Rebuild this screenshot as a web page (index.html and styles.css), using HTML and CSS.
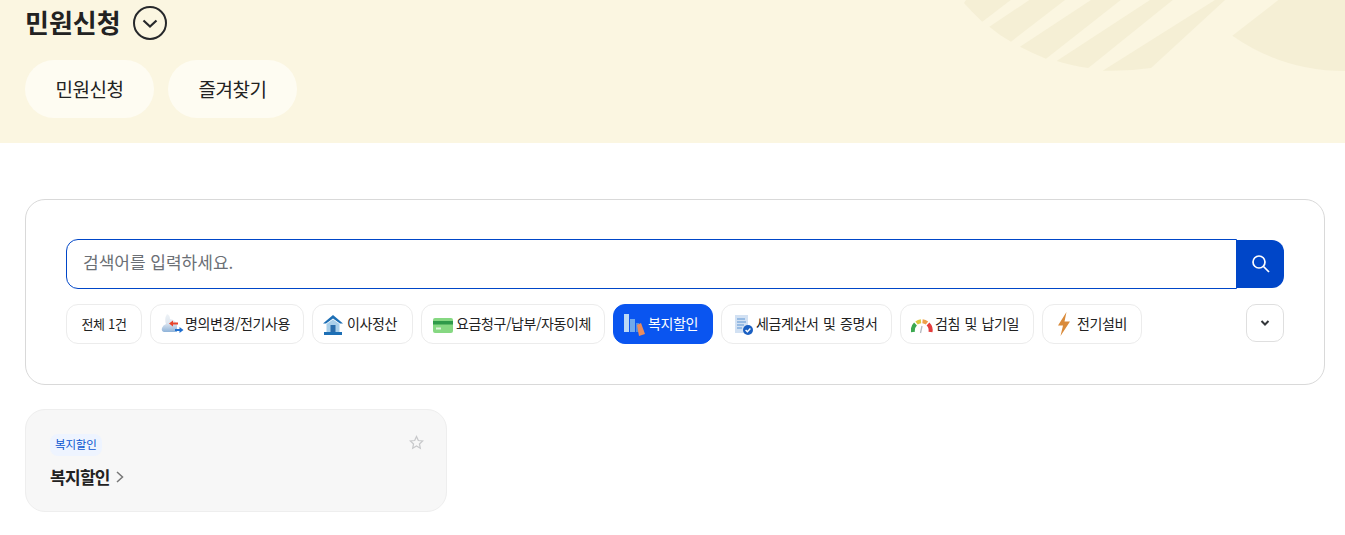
FILE: index.html
```html
<!DOCTYPE html>
<html lang="ko">
<head>
<meta charset="utf-8">
<title>민원신청</title>
<link rel="stylesheet" href="styles.css">
</head>
<body>
<header class="banner">
  <svg class="banner-art" width="1345" height="143" viewBox="0 0 1345 143" aria-hidden="true">
    <path d="M966 0H1010.7L982.3 21.7Q972 12 964 3Z"/>
    <path d="M1029.3 0H1065L1011 41.7Q999 35 989.3 26.7Z"/>
    <path d="M1091 0H1120.7L1046 58.7Q1032 53 1020 46.7Z"/>
    <path d="M1150 0H1172.7L1088.3 68Q1071 65.500 1056.700 61Z"/>
    <path d="M1215 0H1225L1151 68Q1127 71.500 1102.700 70.700Z"/>
    <path d="M1278.300 0H1345V71Q1283 71 1232.300 35.700Z"/>
  </svg>
  <div class="title-row">
    <h1 class="title">민원신청</h1>
    <span class="title-toggle">
      <svg width="34" height="34" viewBox="0 0 34 34" fill="none" stroke="#26282b" aria-hidden="true"><circle cx="17" cy="17" r="16" stroke-width="2"/><path d="M10.500 14.500L17 20.500L23.500 14.500" stroke-width="2.200"/></svg>
    </span>
  </div>
  <nav class="tabs">
    <a class="tab">민원신청</a>
    <a class="tab">즐겨찾기</a>
  </nav>
</header>
<main class="content">
  <section class="panel">
    <div class="search">
      <div class="search-input">검색어를 입력하세요.</div>
      <div class="search-btn">
        <svg width="20" height="20" viewBox="0 0 20 20" fill="none" stroke="#fff" stroke-width="1.700" aria-hidden="true"><circle cx="8" cy="8" r="6"/><path d="M12.500 12.500L18 18"/></svg>
      </div>
    </div>
    <div class="filters">
      <div class="chips">
        <span class="chip chip-all">전체 1건</span>
        <span class="chip">
          <svg class="chip-icon" viewBox="0 0 24 24" aria-hidden="true">
            <defs><linearGradient id="cloud" x1="0" y1="0" x2="0" y2="1"><stop offset="0" stop-color="#eef2f6"/><stop offset="0.5" stop-color="#dfe7f0"/><stop offset="1" stop-color="#8fb3d9"/></linearGradient></defs>
            <path d="M6 2Q9 3 9 7Q15 8 16 13V20H3Q0 19 1 16Q2 13 5 12Q3 7 6 2Z" fill="url(#cloud)"/>
            <path d="M17 10.500H12V8.500L8 11.500L12 14.500V12.500H17Z" fill="#e8452c"/>
            <path d="M14 17H18.500V15L22.500 18L18.500 21V19H14Z" fill="#1f6fd0"/>
          </svg>명의변경/전기사용</span>
        <span class="chip">
          <svg class="chip-icon" viewBox="0 0 24 24" aria-hidden="true">
            <path d="M10 3L20 11.500H17L10 6.500L3 11.500H0Z" fill="#1d6fb5"/>
            <path d="M10 7.500L16.500 12V20H3.500V12Z" fill="#a9cfea"/>
            <path d="M7.500 13H12.500V20H7.500Z" fill="#2a6cab"/>
            <path d="M1 20H19V23H1Z" fill="#1d6fb5"/>
          </svg>이사정산</span>
        <span class="chip">
          <svg class="chip-icon" viewBox="0 0 24 24" aria-hidden="true">
            <rect x="1" y="6" width="20" height="15" rx="2" fill="#86d882"/>
            <rect x="1" y="9" width="20" height="3.500" fill="#2f9a4a"/>
            <rect x="4" y="15.500" width="5" height="2" fill="#dbf4da"/>
          </svg>요금청구/납부/자동이체</span>
        <span class="chip chip-active">
          <svg class="chip-icon" viewBox="0 0 24 24" aria-hidden="true">
            <rect x="0" y="2" width="5" height="18" fill="#bcd8f5"/>
            <rect x="6" y="7" width="5" height="13" fill="#6fa9ec"/>
            <rect x="12" y="11" width="3" height="9" fill="#4d8fe6"/>
            <path d="M13 13L17 11L21 22L15 24Z" fill="#e98c5e"/>
          </svg>복지할인</span>
        <span class="chip">
          <svg class="chip-icon" viewBox="0 0 24 24" aria-hidden="true">
            <rect x="3" y="3" width="13" height="18" fill="#d2e1f3"/>
            <path d="M5 7H13M5 10H14M5 13H12M5 16H10" stroke="#84aede" stroke-width="1.300"/>
            <circle cx="16" cy="18" r="5" fill="#1a5fc2"/>
            <path d="M13.600 18L15.400 19.800L18.400 16.500" stroke="#fff" stroke-width="1.400" fill="none"/>
          </svg>세금계산서 및 증명서</span>
        <span class="chip">
          <svg class="chip-icon" viewBox="0 0 24 24" fill="none" aria-hidden="true">
            <path d="M2 20A9 9 0 0 1 4.500 12" stroke="#3aa84f" stroke-width="4"/>
            <path d="M5.500 11A9 9 0 0 1 10 9.300" stroke="#dcc83f" stroke-width="4"/>
            <path d="M11.500 9.300A9 9 0 0 1 16 11" stroke="#ee9f4a" stroke-width="4"/>
            <path d="M17 12A9 9 0 0 1 19.500 20" stroke="#e43c3c" stroke-width="4"/>
            <path d="M11 14L9.500 21" stroke="#b5b9bf" stroke-width="1.300"/>
          </svg>검침 및 납기일</span>
        <span class="chip">
          <svg class="chip-icon" viewBox="0 0 24 24" aria-hidden="true">
            <path d="M13.500 0L5 13.500H10L7.500 24L17 9.500H11.500Z" fill="#d98a3a"/>
          </svg>전기설비</span>
      </div>
      <button class="more" type="button" aria-label="더보기">
        <svg width="10" height="8" viewBox="0 0 10 8" fill="none" stroke="#33363a" stroke-width="2" aria-hidden="true"><path d="M1.500 2L5 5.500L8.500 2"/></svg>
      </button>
    </div>
  </section>
  <article class="card">
    <div class="card-top">
      <span class="badge">복지할인</span>
      <svg class="star" width="15" height="15" viewBox="0 0 24 24" fill="none" stroke="#c8c9cb" stroke-width="2" aria-hidden="true"><path d="M12 2.500L14.900 8.800L21.800 9.600L16.700 14.300L18.100 21.100L12 17.700L5.900 21.100L7.300 14.300L2.200 9.600L9.100 8.800Z"/></svg>
    </div>
    <h2 class="card-title">복지할인
      <svg width="8" height="12" viewBox="0 0 8 12" fill="none" stroke="#777" stroke-width="1.500" aria-hidden="true"><path d="M1 1L6.500 6L1 11"/></svg>
    </h2>
  </article>
</main>
</body>
</html>
```
FILE: styles.css
```css
* { box-sizing: border-box; }
html, body { margin: 0; padding: 0; background: #fff; }
body {
  font-family: "Noto Sans CJK KR", "Noto Sans", sans-serif;
  color: #222;
  height: 535px;
  overflow: hidden;
}
.banner {
  position: relative;
  height: 143px;
  padding: 3px 25px 0;
  background: #fbf6e1;
  overflow: hidden;
}
.banner-art { position: absolute; left: 0; top: 0; fill: #f5efd5; }
.title-row {
  position: relative;
  display: flex;
  align-items: center;
  gap: 12px;
  height: 38px;
}
.title {
  margin: 0;
  font-size: 26px;
  font-weight: 700;
  line-height: 38px;
  color: #222;
}
.title-toggle { display: flex; margin-top: 2px; }
.tabs { position: relative; display: flex; gap: 14px; margin-top: 19px; }
.tab {
  display: flex;
  align-items: center;
  justify-content: center;
  width: 129px;
  height: 58px;
  padding-bottom: 2px;
  border-radius: 29px;
  background: #fefcf2;
  font-size: 19px;
  letter-spacing: -0.5px;
  color: #222;
}
.content { padding: 56px 20px 0 25px; }
.panel {
  height: 186px;
  padding: 39px 40px 0;
  border: 1px solid #d9d9d9;
  border-radius: 20px;
  background: #fff;
}
.search { display: flex; align-items: center; }
.search-input {
  flex: 1;
  height: 50px;
  padding-left: 16px;
  border: 1px solid #0046c8;
  border-radius: 12px 0 0 12px;
  font-size: 17px;
  line-height: 44px;
  color: #6b6f75;
}
.search-btn {
  display: flex;
  align-items: center;
  justify-content: center;
  width: 47px;
  height: 48px;
  border-radius: 0 12px 12px 0;
  background: #0046c8;
}
.filters { display: flex; justify-content: space-between; align-items: flex-start; margin-top: 15px; }
.chips {
  display: grid;
  grid-template-columns: 76px 154px 101px 184px 100px 171px 134px 100px;
  gap: 8px;
}
.chip {
  display: flex;
  align-items: center;
  height: 40px;
  padding: 0 0 2px 10px;
  border: 1px solid #ececec;
  border-radius: 12px;
  background: #fff;
  font-size: 14px;
  letter-spacing: -0.4px;
  word-spacing: 1px;
  color: #222;
  white-space: nowrap;
}
.chip-all {
  justify-content: center;
  padding-left: 0;
  font-size: 13px;
  letter-spacing: -0.3px;
  word-spacing: 0;
}
.chip-icon { width: 24px; height: 24px; margin-top: 2px; flex: none; }
.chip-active { background: #0a55f0; border-color: #0a55f0; color: #fff; }
.more {
  display: flex;
  align-items: center;
  justify-content: center;
  width: 38px;
  height: 38px;
  padding: 0;
  border: 1px solid #dfdfdf;
  border-radius: 10px;
  background: #fff;
}
.card {
  width: 422px;
  height: 103px;
  margin-top: 24px;
  padding: 24px 22px 0 24px;
  border: 1px solid #eee;
  border-radius: 20px;
  background: #f7f7f7;
}
.card-top { display: flex; justify-content: space-between; align-items: flex-start; }
.badge {
  height: 22px;
  padding: 0 5px;
  border-radius: 8px;
  background: #eef4ff;
  font-size: 11.5px;
  line-height: 21px;
  letter-spacing: -0.2px;
  color: #0a55d0;
}
.star { margin-top: 1px; }
.card-title {
  display: flex;
  align-items: center;
  gap: 6px;
  margin: 9px 0 0;
  font-size: 17px;
  font-weight: 700;
  line-height: 24px;
  letter-spacing: -0.7px;
  color: #222;
}
```
